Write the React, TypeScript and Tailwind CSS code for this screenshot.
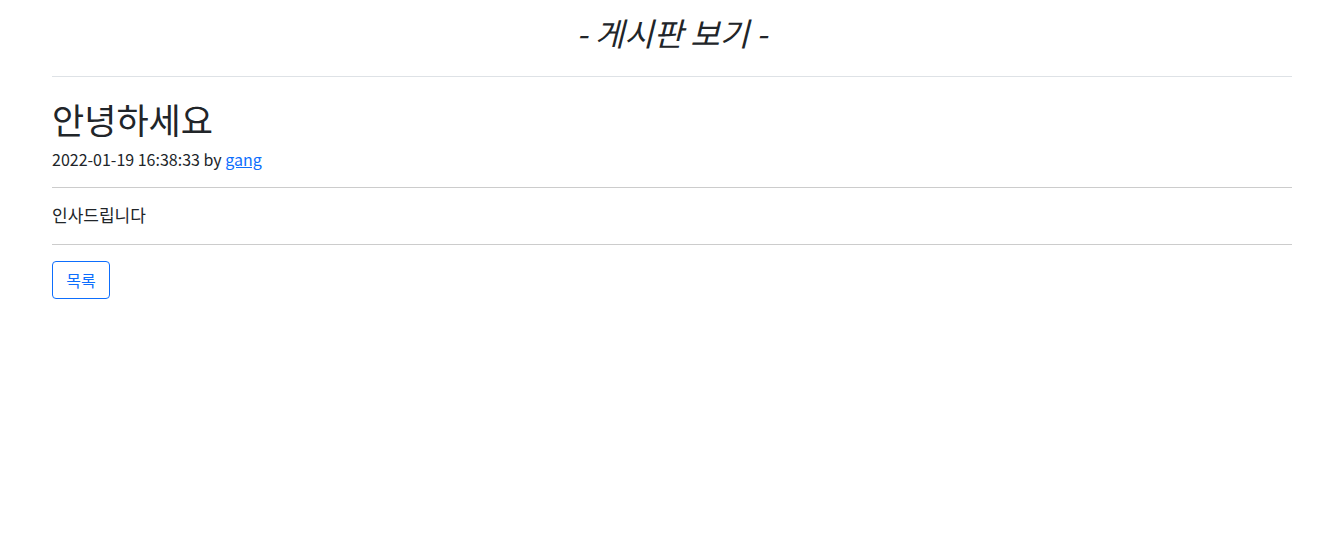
import React from 'react';

export default function App() {
  return (
    <div
      className="min-h-screen bg-white text-[#212529]"
      style={{ fontFamily: '"Noto Sans CJK KR", "Noto Sans", sans-serif' }}
    >
      <div className="ml-[52px] w-[1240px]">
        {/* 페이지 제목 */}
        <h2 className="pt-[10px] pb-[22px] text-center text-[32px] italic leading-[44px]">- 게시판 보기 -</h2>
        <hr className="border-t border-[#dee2e6]" />

        <div className="pt-[21px]">
          <h3 className="text-[35px] leading-[42px]">안녕하세요</h3>
          <div className="mt-[7px] text-[16px] leading-[24px]">
            2022-01-19 16:38:33 by{' '}
            <a href="#" className="text-[#0d6efd] underline">
              gang
            </a>
          </div>
        </div>
        <hr className="mt-[16px] border-t border-[#cccccc]" />
        <div className="pt-[15px] pb-[17px] text-[17px] leading-[24px]">인사드립니다</div>
        <hr className="border-t border-[#cccccc]" />

        <button className="mt-[16px] h-[38px] w-[58px] rounded-[4px] border border-[#0d6efd] text-[16px] text-[#0d6efd]">
          목록
        </button>
      </div>
    </div>
  );
}
